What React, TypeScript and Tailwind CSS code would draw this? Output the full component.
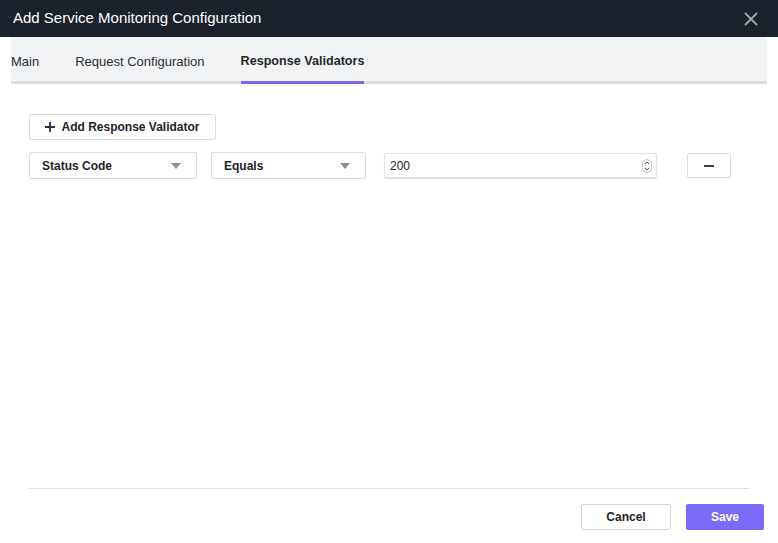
import { useState } from "react";

const tabs = ["Main", "Request Configuration", "Response Validators"];

function Caret() {
  return (
    <svg width="10" height="6" viewBox="0 0 10 6" className="shrink-0">
      <path d="M0 0 L10 0 L5 6 Z" fill="#8a8d92" />
    </svg>
  );
}

function Select({ label, width }: { label: string; width: string }) {
  return (
    <div
      className={`${width} h-[27px] flex items-center justify-between pl-3 pr-[15px] border border-[#dcdcdc] rounded-[2px] bg-white text-[12px] font-bold text-[#1f2328]`}
    >
      <span>{label}</span>
      <Caret />
    </div>
  );
}

export default function App() {
  const [active, setActive] = useState(2);
  const [code, setCode] = useState("200");

  return (
    <div className="w-[778px] h-[543px] flex flex-col bg-white font-['Liberation_Sans',Arial,sans-serif] text-[#1f2328]">
      <header className="h-[37px] shrink-0 bg-[#1b222c] flex items-center justify-between pl-[13px] pr-[20px]">
        <h1 className="text-[15px] text-white">Add Service Monitoring Configuration</h1>
        <svg width="14" height="14" viewBox="0 0 14 14">
          <path d="M1 1 L13 13 M13 1 L1 13" stroke="#a3a6ab" strokeWidth="1.8" />
        </svg>
      </header>

      <nav className="mx-[11px] h-[47px] shrink-0 bg-[#f2f3f5] border-b-[3px] border-[#dcdde0] flex items-stretch gap-[36px]">
        {tabs.map((t, i) => (
          <button
            key={t}
            onClick={() => setActive(i)}
            className={`-mb-[3px] pt-[5px] border-b-[3px] ${
              i === active
                ? "border-[#7866f6] text-[12.6px] font-bold text-[#23272c]"
                : "border-transparent text-[13px] text-[#2a2e33]"
            }`}
          >
            {t}
          </button>
        ))}
      </nav>

      <main className="flex-1 pl-[29px] pt-[30px]">
        <button className="h-[26px] w-[187px] flex items-center justify-center gap-[6px] border border-[#dcdcdc] rounded-[2px] text-[12px] font-bold">
          <svg width="10" height="10" viewBox="0 0 10 10">
            <path d="M5 0 V10 M0 5 H10" stroke="#2a2e33" strokeWidth="1.8" />
          </svg>
          Add Response Validator
        </button>

        <div className="mt-[12px] flex items-center">
          <Select label="Status Code" width="w-[168px]" />
          <div className="w-[14px]" />
          <Select label="Equals" width="w-[155px]" />
          <div className="w-[18px]" />
          <div className="w-[273px] h-[25px] flex items-center border border-[#e3e3e3] shadow-[0_1px_1px_rgba(0,0,0,0.12)] rounded-[2px] pl-[5px] pr-[4px]">
            <input
              value={code}
              onChange={(e) => setCode(e.target.value)}
              className="flex-1 min-w-0 text-[12px] outline-none bg-transparent"
            />
            <svg width="10" height="14" viewBox="0 0 10 14">
              <rect x="0.5" y="0.5" width="9" height="13" rx="4.5" fill="#fafafa" stroke="#c9c9c9" />
              <path d="M3 5 L5 3 L7 5 M3 9 L5 11 L7 9" stroke="#555" strokeWidth="1" fill="none" />
            </svg>
          </div>
          <div className="w-[30px]" />
          <button className="w-[44px] h-[25px] flex items-center justify-center border border-[#dcdcdc] rounded-[2px] shadow-[0_1px_1px_rgba(0,0,0,0.06)]">
            <span className="block w-[10px] h-[2px] bg-[#3a3d42]" />
          </button>
        </div>
      </main>

      <footer className="shrink-0 pb-[13px]">
        <div className="ml-[29px] mr-[29px] border-t border-[#dedede]" />
        <div className="mt-[15px] pr-[14px] flex justify-end gap-[15px]">
          <button className="w-[90px] h-[26px] border border-[#d6d6d6] rounded-[2px] text-[12px] font-bold text-[#1f2328]">
            Cancel
          </button>
          <button className="w-[78px] h-[26px] rounded-[2px] bg-[#7b69f7] text-[12px] font-bold text-white">
            Save
          </button>
        </div>
      </footer>
    </div>
  );
}
